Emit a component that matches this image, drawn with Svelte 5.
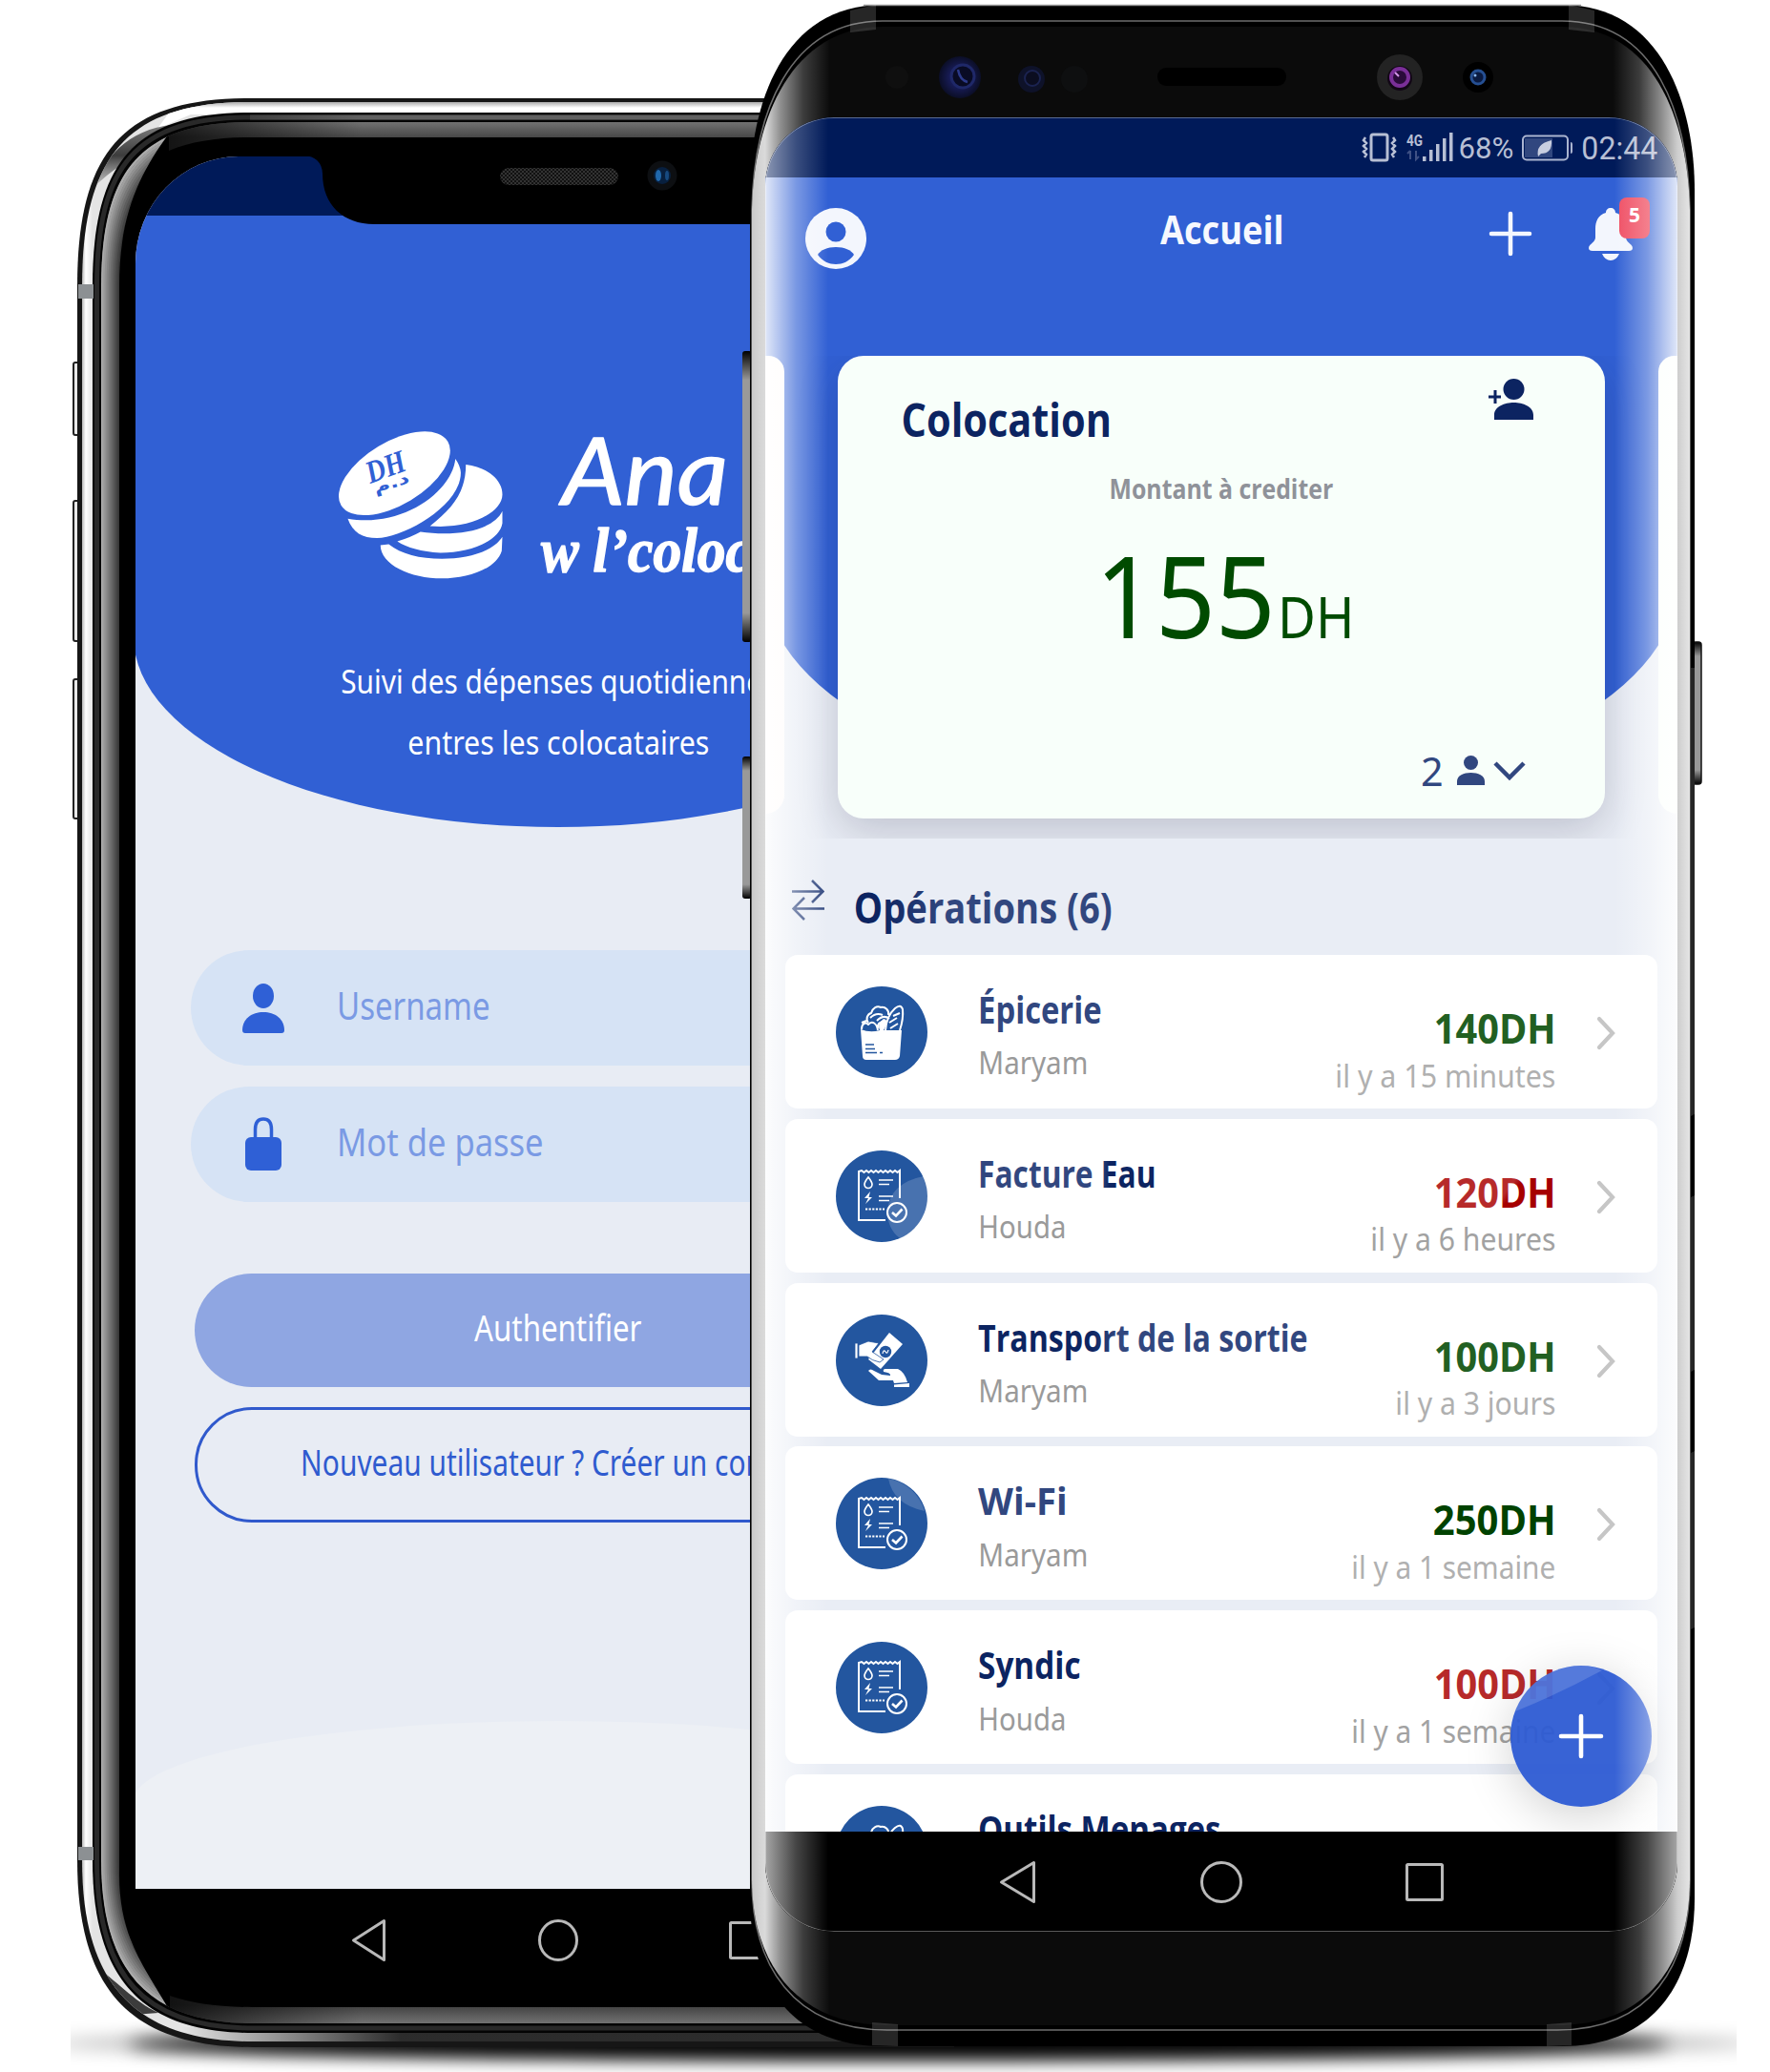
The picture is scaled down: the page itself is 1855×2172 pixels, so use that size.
<script>
  const NAVY = '#0c2461';
  const SLATE = '#31477f';
  const rows = [
    { icon: 'basket', title: 'Épicerie', tw: 126, fill: SLATE, who: 'Maryam', ww: 112, amount: '140DH', aw: 124, color: '#226022', when: 'il y a 15 minutes', dw: 228, grey: '#b0b0b0' },
    { icon: 'bill', title: 'Facture Eau', tw: 183, fill: 'url(#inkFall)', who: 'Houda', ww: 89, amount: '120DH', aw: 124, color: 'url(#redFall)', when: 'il y a 6 heures', dw: 191, grey: '#a2a2a2', shine: 'low' },
    { icon: 'hands', title: 'Transport de la sortie', tw: 342, fill: 'url(#inkRise)', who: 'Maryam', ww: 112, amount: '100DH', aw: 124, color: '#226022', when: 'il y a 3 jours', dw: 165, grey: '#b0b0b0' },
    { icon: 'bill', title: 'Wi-Fi', tw: 90, fill: SLATE, who: 'Maryam', ww: 112, amount: '250DH', aw: 125, color: '#004200', when: 'il y a 1 semaine', dw: 211, grey: '#b0b0b0', shine: 'high' },
    { icon: 'bill', title: 'Syndic', tw: 104, fill: NAVY, who: 'Houda', ww: 89, amount: '100DH', aw: 124, color: '#b72a2a', when: 'il y a 1 semaine', dw: 211, grey: '#a2a2a2' },
    { icon: 'basket', title: 'Outils Menages', tw: 251, fill: NAVY, who: '', ww: 10, amount: '', aw: 10, color: NAVY, when: '', dw: 10, grey: '#b0b0b0' }
  ];

  // Outline of one layer of the left phone's body: left edge x, top edge t, bottom edge b
  const shell = (x, t, b, k = 56) =>
    `M1000 ${t}H262C${x + k - 8} ${t} ${x} ${t + k} ${x} 300V1950C${x} ${b - k - 4} ${x + k} ${b} 265 ${b}H1000Z`;

  // Concentric bands that shade the left rim from light to dark
  const bands = Array.from({ length: 11 }, (_, i) => ({ inset: i * 2, tone: 172 - i * 13 }));
</script>

<!-- One line of text fitted to a width; the box spans cap height to baseline -->
{#snippet line(text, w, size, fill, kind)}
  <svg class="line {kind}" width={w} height={size * 0.714}>
    <text x={-size * 0.05} y={size * 0.714} font-size={size} {fill} textLength={w + size * 0.09} lengthAdjust="spacingAndGlyphs">{text}</text>
  </svg>
{/snippet}

{#snippet navIcons(cls, pitch, r)}
  <svg class={cls} width="470" height="50" viewBox="0 0 470 50" fill="none" stroke="#b9b9b9" stroke-width="3" stroke-linejoin="round">
    <path d="M{235 - pitch - r + 3} 25L{235 - pitch + r - 4} 4.500V45.500Z" />
    <ellipse cx="235" cy="25" rx={r} ry="20.500" />
    <rect x={235 + pitch - r + 2} y="6.500" width={2 * r - 4} height="37" rx="1" />
  </svg>
{/snippet}

<div class="stage">
  <div class="ground"></div>

  <!-- Phone on the left: sign-in -->
  <svg class="layer" width="1100" height="2172" viewBox="0 0 1100 2172">
    <defs>
      <linearGradient id="steel" x1="86" x2="97" y1="0" y2="0" gradientUnits="userSpaceOnUse"><stop offset="0" stop-color="#b8b8b8" /><stop offset=".35" stop-color="#fff" /><stop offset="1" stop-color="#e4e4e4" /></linearGradient>
      <linearGradient id="steelFoot" x1="190" x2="420" y1="0" y2="0" gradientUnits="userSpaceOnUse"><stop offset="0" stop-color="#222" stop-opacity="0" /><stop offset="1" stop-color="#222" stop-opacity=".95" /></linearGradient>
      <linearGradient id="steelTop" x1="0" x2="0" y1="107" y2="119" gradientUnits="userSpaceOnUse"><stop offset="0" stop-color="#aaa" /><stop offset=".5" stop-color="#fff" /><stop offset="1" stop-color="#fff" /></linearGradient>
      <linearGradient id="shade" x1="0" x2="0" y1="0" y2="1"><stop offset="0" stop-color="#3a3a3a" stop-opacity=".6" /><stop offset=".5" stop-color="#333" stop-opacity=".95" /><stop offset="1" stop-color="#999" stop-opacity=".5" /></linearGradient>
      <linearGradient id="rimTop" x1="0" x2="0" y1="128" y2="2122" gradientUnits="userSpaceOnUse"><stop offset="0" stop-color="#727272" /><stop offset=".008" stop-color="#484848" /><stop offset=".99" stop-color="#404040" /><stop offset="1" stop-color="#747474" /></linearGradient>
      <linearGradient id="rimFade" x1="170" x2="380" y1="0" y2="0" gradientUnits="userSpaceOnUse"><stop offset="0" stop-color="#000" stop-opacity=".75" /><stop offset="1" stop-color="#000" stop-opacity="0" /></linearGradient>
      <linearGradient id="lineFade" x1="180" x2="380" y1="0" y2="0" gradientUnits="userSpaceOnUse"><stop offset="0" stop-color="#292929" /><stop offset="1" stop-color="#606060" /></linearGradient>
      <clipPath id="steelClip"><path d={shell(86, 107, 2140)} /></clipPath>
      <clipPath id="rimClip"><path d={shell(106, 128, 2121, 50)} /></clipPath>
      <clipPath id="leftClip"><path d="M90 100H177V2140H90Z" /></clipPath>
      <pattern id="mesh" width="4" height="4" patternUnits="userSpaceOnUse"><rect width="4" height="4" fill="#111" /><path d="M0 0L4 4M4 0L0 4" stroke="#333" stroke-width="1" /></pattern>
    </defs>
    <g fill="#e8e8e8" stroke="#222" stroke-width="2">
      <rect x="77" y="380" width="8" height="76" rx="2" /><rect x="77" y="525" width="8" height="147" rx="2" /><rect x="77" y="712" width="8" height="146" rx="2" />
    </g>
    <path d={shell(81, 103, 2146)} fill="#161616" />
    <path d={shell(86, 107, 2140)} fill="url(#steel)" />
    <g clip-path="url(#steelClip)">
      <path d="M190 100H1000V120H200L165 135Z" fill="url(#steelTop)" />
      <path d="M98 196C112 160 140 132 190 130L176 146C150 158 130 170 112 184Z" fill="url(#shade)" />
      <path d="M98 2060C120 2074 140 2098 166 2110L140 2112C120 2096 104 2076 98 2060Z" fill="#3c3c3c" />
      <path d="M190 2125H1000V2145H190Z" fill="url(#steelFoot)" />
    </g>
    <path d={shell(97, 118, 2131, 52)} fill="#030303" />
    <path d={shell(101.5, 123, 2126, 50)} fill="none" stroke="#292929" stroke-width="5" />
    <path d="M262 120.500H900V125.500H262Z" fill="url(#lineFade)" />
    <path d={shell(106, 128, 2121, 50)} fill="url(#rimTop)" />
    <g clip-path="url(#rimClip)">
      <path d="M100 120H380V170H100ZM100 2080H380V2125H100Z" fill="url(#rimFade)" />
      <g clip-path="url(#leftClip)">
        {#each bands as b}
          <path d={shell(107 + b.inset, 129 + b.inset, 2120 - b.inset, 50)} fill="none" stroke="rgb({b.tone},{b.tone},{b.tone})" stroke-width="3" />
        {/each}
      </g>
      <path d="M177 140C148 180 125 222 125 300V1965C125 2030 150 2060 178 2108V2092C200 2100 230 2104 265 2104H1000V144H262C230 144 200 148 177 158Z" fill="#000" />
    </g>
    <path d="M82 298H98V313H82ZM82 1936H98V1950H82Z" fill="#8c9093" />
  </svg>

  <section class="signin">
    <div class="top-strip"></div>
    <div class="hero">
      <div class="brand">
        <svg class="coins" width="180" height="163" viewBox="90 80 540 490" fill="#fff">
          <ellipse cx="280" cy="228" rx="196" ry="99" transform="rotate(-31 280 228)" />
          <path d="M133 371C148 415 180 432 225 432C310 430 490 330 489 225Q488 205 472 182C460 290 300 400 133 371Z" />
          <path d="M505 200C570 208 620 245 620 295C620 350 520 405 392 394C460 340 505 290 505 200Z" />
          <path d="M620 347V385C612 440 520 478 425 478C365 475 320 462 289 442Q330 430 362 412C470 428 590 410 620 347Z" />
          <path d="M236 454L262 451C300 482 360 497 430 497C510 497 590 475 620 428L618 472C600 530 510 559 430 559C330 559 236 515 236 454Z" />
          <text class="dh" font-size="100" textLength="126" lengthAdjust="spacingAndGlyphs" transform="translate(204 260) rotate(-20)">DH</text>
          <text class="ar" font-size="50" textLength="116" lengthAdjust="spacingAndGlyphs" transform="translate(220 292) rotate(-18)">د.م</text>
        </svg>
        <div class="wordmark">
          <svg class="line ana" width="174" height="70"><text x="0" y="70" fill="#fff" font-size="97" textLength="174" lengthAdjust="spacingAndGlyphs">Ana</text></svg>
          <svg class="line coloc" width="240" height="48"><text x="0" y="48" fill="#fff" font-size="65" textLength="220" lengthAdjust="spacingAndGlyphs">w l’coloc</text></svg>
        </div>
      </div>
      <div class="tagline">
        {@render line('Suivi des dépenses quotidiennes', 453, 35, '#fff', '')}
        {@render line('entres les colocataires', 313, 35, '#fff', '')}
      </div>
    </div>
    <div class="form">
      <div class="field">
        <svg width="44" height="52" viewBox="0 0 44 52" fill="#2f60d6"><ellipse cx="22" cy="13" rx="11" ry="13" /><path d="M0 49C0 37 10 30 22 30S44 37 44 49Q44 52 41 52H3Q0 52 0 49Z" /></svg>
        {@render line('Username', 157, 40, '#7a9ae4', '')}
      </div>
      <div class="field">
        <svg width="44" height="57" viewBox="0 0 44 57"><path d="M13.500 24V13Q13.500 2 22 2T30.500 13V24" fill="none" stroke="#2f60d6" stroke-width="3.500" /><rect x="3" y="21" width="38" height="35" rx="6" fill="#2f60d6" /></svg>
        {@render line('Mot de passe', 213, 40, '#7a9ae4', '')}
      </div>
      <div class="button solid">{@render line('Authentifier', 172, 38, '#fff', '')}</div>
      <div class="button ghost">{@render line('Nouveau utilisateur ? Créer un compte', 537, 38, '#2f5bcf', '')}</div>
    </div>
    <div class="hill"></div>
  </section>
  <svg class="layer" width="1100" height="300" viewBox="0 0 1100 300">
    <path d="M318 163Q337 164 338 182C338 215 360 235 392 235H800V163Z" fill="#000" />
    <rect x="524" y="176" width="124" height="18" rx="9" fill="url(#mesh)" />
    <circle cx="694" cy="184" r="15.500" fill="#0d0f12" /><circle cx="694" cy="184" r="9" fill="#08203f" />
    <ellipse cx="690" cy="184" rx="3" ry="6" fill="#2068ac" /><ellipse cx="699" cy="184" rx="2" ry="5" fill="#174a80" />
  </svg>
  {@render navIcons('nav-left', 198, 19.5)}

  <!-- Phone on the right: home -->
  <svg class="layer" width="1855" height="2172" viewBox="0 0 1855 2172">
    <defs>
      <linearGradient id="edge" x1="788" x2="1772" y1="0" y2="0" gradientUnits="userSpaceOnUse">
        <stop offset="0" stop-color="#fff" stop-opacity=".78" /><stop offset=".014" stop-color="#fff" stop-opacity=".85" /><stop offset=".03" stop-color="#fff" stop-opacity=".55" /><stop offset=".055" stop-color="#fff" stop-opacity=".2" /><stop offset=".083" stop-color="#fff" stop-opacity="0" />
        <stop offset=".917" stop-color="#fff" stop-opacity="0" /><stop offset=".945" stop-color="#fff" stop-opacity=".2" /><stop offset=".97" stop-color="#fff" stop-opacity=".55" /><stop offset=".986" stop-color="#fff" stop-opacity=".8" /><stop offset="1" stop-color="#fff" stop-opacity=".9" />
      </linearGradient>
      <linearGradient id="key" x1="0" x2="0" y1="0" y2="1"><stop offset="0" stop-color="#000" /><stop offset=".1" stop-color="#999" /><stop offset=".9" stop-color="#999" /><stop offset="1" stop-color="#000" /></linearGradient>
      <radialGradient id="lensBlue"><stop offset="0" stop-color="#0a0c2a" /><stop offset=".5" stop-color="#171b55" /><stop offset="1" stop-color="#0b0e26" /></radialGradient>
      <linearGradient id="inkFall"><stop offset=".68" stop-color="#31477f" /><stop offset=".74" stop-color="#0c2461" /></linearGradient>
      <linearGradient id="inkRise"><stop offset=".34" stop-color="#0c2461" /><stop offset=".42" stop-color="#31477f" /></linearGradient>
      <linearGradient id="inkOps"><stop offset=".1" stop-color="#0c2461" /><stop offset=".35" stop-color="#31477f" /></linearGradient>
      <linearGradient id="redFall" x1="0" y1="0" x2="1" y2=".35"><stop offset=".68" stop-color="#b72a2a" /><stop offset=".74" stop-color="#a60000" /></linearGradient>
    </defs>
    <rect x="778" y="368" width="10" height="305" rx="3" fill="url(#key)" />
    <rect x="778" y="793" width="10" height="149" rx="3" fill="url(#key)" />
    <rect x="1774" y="673" width="9" height="149" rx="3" fill="url(#key)" stroke="#111" stroke-width="1.500" />
    <path d="M786 200C786 110 820 5 925 5H1637C1742 5 1776 110 1776 200V1990C1776 2080 1732 2145 1637 2145H925C830 2145 786 2080 786 1990Z" fill="#000" />
    <path d="M1772 700V1170L1776 1168V700ZM1772 1255L1776 1253V1436L1772 1438ZM1772 1523L1776 1521V1706L1772 1708Z" fill="#262626" />
    <path d="M905 5.500H1657" stroke="#999" stroke-width="1.500" />
    <path d="M788 220C790 120 826 22 925 22H1637C1736 22 1769 120 1771 220V1970C1771 2060 1731 2128 1632 2128H930C831 2128 788 2060 788 1970Z" fill="none" stroke="#6e6e6e" stroke-width="1.500" />
    <path d="M788 220C790 124 830 28 925 28H1637C1732 28 1769 124 1771 220V1970C1771 2058 1727 2123 1632 2123H930C835 2123 788 2058 788 1970Z" fill="#0b0b0b" />
    <path d="M788 220C790 124 830 28 925 28H1637C1732 28 1769 124 1771 220V1970C1771 2058 1727 2123 1632 2123H930C835 2123 788 2058 788 1970Z" fill="url(#edge)" />
    <g fill="#fff" opacity=".15"><path d="M891 11L918 5V31L891 34ZM1644 5L1671 11V34L1644 31ZM914 2120L941 2122V2145L914 2144ZM1621 2122L1647 2120V2144L1621 2145Z" /></g>
    <circle cx="940" cy="81" r="12" fill="#0f0f0f" /><circle cx="1126" cy="83" r="14" fill="#0e0f10" />
    <circle cx="1006" cy="81" r="22" fill="url(#lensBlue)" /><circle cx="1009" cy="80" r="12" fill="#090b24" stroke="#1f2868" stroke-width="3" /><path d="M1004 73Q1006 84 1014 86" fill="none" stroke="#2c3a8a" stroke-width="2.500" />
    <circle cx="1081" cy="83" r="14" fill="#0e1229" /><circle cx="1082" cy="82" r="8" fill="#0b0d20" stroke="#1b2350" stroke-width="2" />
    <rect x="1213" y="71" width="135" height="19" rx="9" fill="#000" />
    <circle cx="1467" cy="81" r="24" fill="#232323" /><circle cx="1467" cy="82" r="13" fill="#120716" /><circle cx="1467" cy="81" r="9" fill="#2a0b3a" stroke="#7a2f98" stroke-width="4" /><path d="M1462 76L1466 80" stroke="#d596ea" stroke-width="2" />
    <circle cx="1549" cy="81" r="16" fill="#000" /><circle cx="1549" cy="81" r="7" fill="#0a1a40" stroke="#254f92" stroke-width="3" /><circle cx="1546" cy="79" r="1.500" fill="#8ab8f0" />
  </svg>

  <section class="home">
    <div class="status edges">
      <svg width="37" height="32" viewBox="0 0 37 32" fill="none" stroke="#b7bfd4" stroke-width="2.500"><rect x="10" y="2" width="17" height="27" rx="2" stroke-width="3" /><path d="M4 5L2 8L5 11L2 14L5 17L2 20L5 23L3 26M33 5L35 8L32 11L35 14L32 17L35 20L32 23L34 26" /></svg>
      <svg class="signal" width="50" height="32" viewBox="0 0 50 32"><text x="0" y="14" class="net" font-size="17" fill="#b7bfd4" textLength="17" lengthAdjust="spacingAndGlyphs">4G</text><path d="M4 19V28M1 22L4 19M10 19V28L13 25" stroke="#3f5184" stroke-width="2" fill="none" /><path d="M17 25H20.500V30H17ZM24 18H27.500V30H24ZM31 12H34.500V30H31ZM38 6H41.500V30H38ZM45 0H48.500V30H45Z" fill="#b7bfd4" /></svg>
      {@render line('68%', 55, 32, '#b7bfd4', 'droid')}
      <svg class="battery" width="54" height="28" viewBox="0 0 54 28"><rect x="1" y="1.500" width="47" height="25" rx="4" fill="none" stroke="#aab4d0" stroke-width="2" /><path d="M3 4H32V24H3Z" fill="#31477f" /><path d="M51 8Q53 8 53 10V18Q53 20 51 20Z" fill="#aab4d0" /><path d="M17 23Q14 10 31 6Q32 20 20 20Z" fill="#c8cee0" /></svg>
      {@render line('02:44', 77, 33, '#b7bfd4', 'droid')}
    </div>

    <div class="app edges">
      <div class="dome"></div>
      <header>
        <svg class="avatar" width="64" height="64" viewBox="0 0 64 64"><circle cx="32" cy="32" r="32" fill="#f3f6fd" /><circle cx="32" cy="25" r="10.500" fill="#3160d4" /><path d="M13 49C16 44 23 41 32 41S48 44 51 49C46 56 39 59 32 59S18 56 13 49Z" fill="#3160d4" /></svg>
        <div class="title">{@render line('Accueil', 126, 42, '#f6f8fe', 'semi')}</div>
        <div class="actions">
          <svg width="46" height="48" viewBox="0 0 46 48" stroke="#f4f7fe" stroke-width="4.600" stroke-linecap="round"><path d="M23 3V45M3 24H43" /></svg>
          <div class="bell">
            <svg width="46" height="55" viewBox="0 0 46 55" fill="#f3f6fd"><path d="M23 0C26 0 28 2 28 5C36 7 39 14 39 22V31C39 36 46 38 46 42Q46 45 42 45H4Q0 45 0 42C0 38 7 36 7 31V22C7 14 10 7 18 5C18 2 20 0 23 0ZM14 48H32Q29 55 23 55T14 48Z" /></svg>
          </div>
        </div>
      </header>

      <div class="carousel">
        <div class="peek left"></div>
        <div class="card">
          <div class="card-head">
            {@render line('Colocation', 216, 49, NAVY, 'semi')}
            <svg width="47" height="43" viewBox="0 0 47 43" fill="#0c2461"><ellipse cx="26.500" cy="11" rx="11" ry="11" /><path d="M6 43V38C6 29 17 25 26.500 25S47 29 47 38V43ZM5.500 12H8.500V17.500H13V20.500H8.500V26H5.500V20.500H0V17.500H5.500Z" /></svg>
          </div>
          <div class="caption">{@render line('Montant à crediter', 232, 29, '#8f9299', 'semi')}</div>
          <div class="sum">
            {@render line('155', 178, 119, '#004b00', '')}
            {@render line('DH', 75, 60, '#004b00', '')}
          </div>
          <div class="people">
            {@render line('2', 20, 41, SLATE, '')}
            <svg width="29" height="31" viewBox="0 0 29 31" fill="#31477f"><circle cx="14.500" cy="7.500" r="7.500" /><path d="M0 31V27C0 21 7 18 14.500 18S29 21 29 27V31Z" /></svg>
            <svg width="34" height="22" viewBox="0 0 34 22" fill="none" stroke="#31477f" stroke-width="4.500"><path d="M2 3L17 18L32 3" /></svg>
          </div>
        </div>
        <div class="peek right"></div>
      </div>

      <div class="heading">
        <svg width="34" height="43" viewBox="0 0 34 43" fill="none" stroke="#31477f" stroke-width="2.500"><path d="M0 12.500H32M21 1L32.500 12.500L21 24M34 30.500H2M13 19L1.500 30.500L13 42" /></svg>
        {@render line('Opérations (6)', 267, 44, 'url(#inkOps)', 'semi')}
      </div>

      <div class="list">
        {#each rows as r}
          <div class="row">
            <svg class="disc" width="96" height="96" viewBox="0 0 96 96">
              <circle cx="48" cy="48" r="48" fill="#23569f" />
              {#if r.shine === 'low'}<path d="M92 27Q56 34 54 64Q54 82 67 92A48 48 0 0 0 92 27Z" fill="#fff" opacity=".17" />{/if}
              {#if r.shine === 'high'}<path d="M55 1Q60 28 93 35A48 48 0 0 0 55 1Z" fill="#fff" opacity=".17" />{/if}
              {#if r.icon === 'basket'}
                <path d="M26 45Q36 49 46 46H69L67 73Q66 77 62 77H32Q28 77 28 73Z" fill="#fff" />
                <g fill="none" stroke="#fff" stroke-width="2" stroke-linejoin="round">
                  <path d="M34 38C31 34 33 29 37 28C38 23 43 20 47 22C52 21 56 25 55 30M27 38L32 36M27 45C27 39 31 37 34 40C38 35 43 39 44 46M36 33Q42 27 49 30M43 36Q50 29 56 34M44 44Q43 37 51 37M52 46Q53 31 62 23Q68 18 70 24Q71 34 67 46M56 38L64 33M57 44L65 39M60 31L67 28" />
                </g>
                <path d="M50 34Q55 35 53 40L50 46H46Q43 39 50 34Z" fill="#fff" />
                <path d="M31 61H40M31 65.500H41M31 69.500H43M46 69.500H49" stroke="#23569f" stroke-width="1.600" />
              {:else if r.icon === 'bill'}
                <g fill="none" stroke="#fff" stroke-width="2">
                  <path d="M67 50V21L64.500 23L62 21L59.500 23L57 21L54.500 23L52 21L49.500 23L47 21L44.500 23L42 21L39.500 23L37 21L34.500 23L32 21L29.500 23L27 21L24 22V73H52" />
                  <path d="M34 28Q30 33 30 35.500A4 4 0 0 0 38 35.500Q38 33 34 28ZM45 31H60M45 35.500H56M45 48H60M45 52.500H56" stroke-width="1.700" />
                  <path d="M31 61.500H51" stroke-dasharray="2.200 1.400" />
                  <circle cx="64" cy="65" r="10" /><path d="M59 65L63 68.500L69.500 61.500" stroke-width="2.600" />
                </g>
                <path d="M36 43L30 50H34L31 56L38 49H34.500Z" fill="#fff" />
              {:else}
                <g fill="#fff">
                  <path d="M56 19L70 31L47 57L34 47Z" />
                  <path d="M20 30H23V46H20ZM24 32L34 28L45 30L38 39L50 47L46 50Q37 48 33 44L24 44Z" stroke="#23569f" stroke-width=".8" />
                  <path d="M34 59Q36 56 40 59L48 63L57 64Q58 61 50 60Q49 57 52 57H65Q72 60 75 71L61 72L60 69H45Z" />
                  <path d="M61 73.500L77 72V76H61Z" />
                </g>
                <circle cx="52" cy="39" r="6.200" fill="#23569f" /><path d="M49 41Q50 36 52 39T55 37" fill="none" stroke="#fff" stroke-width="1.200" />
              {/if}
            </svg>
            <div class="what">
              {@render line(r.title, r.tw, 38.5, r.fill, 'semi')}
              {@render line(r.who, r.ww, 33, '#9a9a9a', 'light')}
            </div>
            <div class="paid">
              {@render line(r.amount, r.aw, 43, r.color, 'semi')}
              {@render line(r.when, r.dw, 33, r.grey, 'light')}
            </div>
            {#if r.amount}
              <svg class="go" width="20" height="36" viewBox="0 0 20 36" fill="none" stroke="#c6c6c6" stroke-width="4.200" stroke-linecap="round"><path d="M3 3L17 18L3 33" /></svg>
            {/if}
          </div>
        {/each}
      </div>

      <div class="fab">
        <svg width="148" height="148" viewBox="0 0 148 148"><path d="M5 48Q50 30 96 5Q50 -15 20 24Q8 36 5 48Z" fill="#fff" opacity=".15" /><path d="M74 53V95M53 74H95" stroke="#fff" stroke-width="4.600" stroke-linecap="round" /></svg>
      </div>
      <div class="badge">{@render line('5', 10, 22, '#fff', 'semi')}</div>
    </div>

    <div class="softkeys edges">{@render navIcons('', 213, 20.5)}</div>
  </section>
</div>

<style>
  :global(body) { margin: 0; background: #fff; }
  .stage { position: relative; width: 1855px; height: 2172px; overflow: hidden; background: #fff; font-family: 'Noto Sans', 'Open Sans', sans-serif; }
  .layer { position: absolute; left: 0; top: 0; }
  svg { display: block; flex: none; }
  .line { overflow: visible; font-family: 'Noto Sans', sans-serif; }
  .line.semi { font-family: 'Open Sans', 'Noto Sans', sans-serif; font-weight: 700; }
  .line.light { font-weight: 400; }
  .line.droid { font-family: Roboto, sans-serif; }
  .net { font-family: Roboto, sans-serif; font-weight: 700; }

  .ground { position: absolute; left: 74px; top: 2112px; width: 1746px; height: 60px; overflow: hidden; }
  .ground::before { content: ''; position: absolute; left: 60px; right: 70px; top: 14px; height: 33px; background: #000; border-radius: 50%; filter: blur(9px); }
  .ground::after { content: ''; position: absolute; left: -20px; right: -20px; top: 16px; height: 28px; background: rgba(0, 0, 0, 0.3); border-radius: 50%; filter: blur(9px); }

  .signin { position: absolute; left: 142px; top: 164px; width: 886px; height: 1816px; overflow: hidden; border-radius: 108px 108px 0 0 / 112px 112px 0 0; background: #e8ecf4; display: flex; flex-direction: column; }
  .top-strip { height: 62px; flex: none; background: #001a59; }
  .hero { height: 641px; flex: none; background: #3160d4; border-radius: 0 0 446px 446px / 0 0 200px 200px; display: flex; flex-direction: column; align-items: center; box-sizing: border-box; padding-top: 221px; margin: 0 -2px; }
  .brand { display: flex; width: 100%; box-sizing: border-box; padding-left: 210px; height: 163px; gap: 37px; }
  .wordmark { padding-top: 12px; display: flex; flex-direction: column; gap: 22px; }
  .wordmark .ana { margin-left: 22px; font-family: 'Lato', sans-serif; font-style: italic; font-weight: 400; }
  .ana text { stroke: #fff; stroke-width: 1.5; stroke-linejoin: round; }
  .wordmark .coloc { font-family: 'Liberation Serif', serif; font-style: italic; font-weight: 700; }
  .coloc text { stroke: #fff; stroke-width: 1.5; stroke-linejoin: round; }
  .dh { font-family: 'Liberation Serif', serif; font-style: italic; font-weight: 700; fill: #3160d4; }
  .ar { font-family: 'DejaVu Sans', sans-serif; font-weight: 700; fill: #3160d4; }
  .tagline { padding-top: 92px; display: flex; flex-direction: column; align-items: center; gap: 39px; }
  .form { padding: 129px 58px 0; display: flex; flex-direction: column; }
  .field { height: 121px; border-radius: 61px; background: #d6e3f5; display: flex; align-items: center; gap: 57px; padding-left: 54px; margin-bottom: 22px; }
  .field :global(.line) { margin-top: -5px; }
  .button { height: 119px; margin: 0 4px; border-radius: 60px; display: flex; align-items: center; justify-content: center; box-sizing: border-box; }
  .button.solid { background: #8fa6e2; margin-top: 53px; }
  .button.ghost { height: 121px; margin-top: 21px; border: 3px solid #3059cc; }
  .button :global(.line) { margin-top: -4px; }
  .hill { position: absolute; left: -2px; right: -2px; bottom: 0; height: 176px; background: #edf0f5; border-radius: 445px 445px 0 0 / 84px 84px 0 0; }
  .stage > :global(.nav-left) { position: absolute; left: 350px; top: 2009px; }

  .home { position: absolute; left: 802px; top: 123px; width: 956px; height: 1902px; border-radius: 72px; overflow: hidden; display: flex; flex-direction: column; background: #000; }
  .home::after { content: ''; position: absolute; inset: 0; border-radius: 72px; box-shadow: inset 0 0 0 1px rgba(255, 255, 255, 0.35); }
  .edges { position: relative; }
  .edges::after { content: ''; position: absolute; inset: 0; pointer-events: none; background: linear-gradient(90deg, rgba(255, 255, 255, var(--glow)), rgba(255, 255, 255, calc(var(--glow) * 0.42)) 32px, transparent 66px, transparent calc(100% - 66px), rgba(255, 255, 255, calc(var(--glow) * 0.42)) calc(100% - 32px), rgba(255, 255, 255, var(--glow))); }
  .status { --glow: 0.55; height: 63px; flex: none; background: #001a59; display: flex; align-items: center; justify-content: flex-end; padding-right: 22px; gap: 10px; }
  .status .signal { margin-right: -4px; }

  .app { --glow: 0.85; height: 1734px; flex: none; overflow: hidden; background: #e9edf5; }
  .dome { position: absolute; left: 0; right: 0; top: 0; height: 651px; background: #3160d4; border-radius: 0 0 478px 478px / 0 0 225px 225px; }
  header { position: relative; height: 187px; box-sizing: border-box; padding: 32px 47px 0 42px; display: grid; grid-template-columns: 1fr auto 1fr; align-items: start; }
  .title { padding: 8px 0 0 6px; }
  .actions { display: flex; justify-content: flex-end; gap: 59px; padding-top: 3px; }
  .bell { margin-top: -3px; }
  .badge { position: absolute; z-index: 1; right: 29px; top: 21px; width: 32px; height: 43px; border-radius: 8px; background: linear-gradient(90deg, #f0566b, #f4828f); display: flex; justify-content: center; align-items: flex-start; padding-top: 10px; box-sizing: border-box; }
  .carousel { position: relative; height: 506px; overflow: hidden; display: flex; justify-content: space-between; }
  .peek { width: 20px; height: 480px; background: #fffbfa; }
  .peek.left { border-radius: 0 20px 24px 0; }
  .peek.right { border-radius: 20px 0 0 24px; background: #fafffb; }
  .card { width: 804px; height: 485px; border-radius: 27px; background: #f8fffa; box-shadow: 0 14px 44px rgba(30, 30, 60, 0.2); box-sizing: border-box; padding: 24px 75px 0 69px; }
  .card-head { display: flex; justify-content: space-between; align-items: flex-start; height: 106px; }
  .card-head :global(.line) { margin-top: 26px; }
  .caption { display: flex; justify-content: center; padding-left: 6px; height: 80px; }
  .caption :global(.line) { margin-top: -1px; }
  .sum { display: flex; align-items: flex-end; gap: 10px; justify-content: center; padding-left: 16px; height: 86px; }
  .people { display: flex; justify-content: flex-end; align-items: center; gap: 9px; margin-top: 122px; padding-right: 8px; }
  .people :global(.line) { margin: 4px 7px 0 0; }
  .heading { position: relative; height: 122px; box-sizing: border-box; padding: 43px 0 0 28px; display: flex; gap: 33px; align-items: flex-start; }
  .heading :global(.line) { margin-top: 15px; }
  .list { position: relative; padding: 0 21px; display: flex; flex-direction: column; gap: 10.8px; }
  .row { height: 161px; flex: none; border-radius: 13px; background: #fff; display: flex; align-items: flex-start; box-sizing: border-box; padding: 33px 44px 0 53px; }
  .what { padding: 11px 0 0 55px; flex: 1; display: flex; flex-direction: column; gap: 30px; }
  .paid { padding-top: 29px; display: flex; flex-direction: column; align-items: flex-end; gap: 22px; }
  .go { margin: 31px 0 0 44px; }
  .fab { position: absolute; left: 781px; top: 1560px; width: 148px; height: 148px; border-radius: 50%; background: rgba(45, 91, 211, 0.95); box-shadow: 0 10px 50px rgba(0, 0, 0, 0.18); overflow: hidden; }
  .softkeys { --glow: 0.65; height: 105px; background: #000; display: flex; align-items: center; justify-content: center; }
</style>
